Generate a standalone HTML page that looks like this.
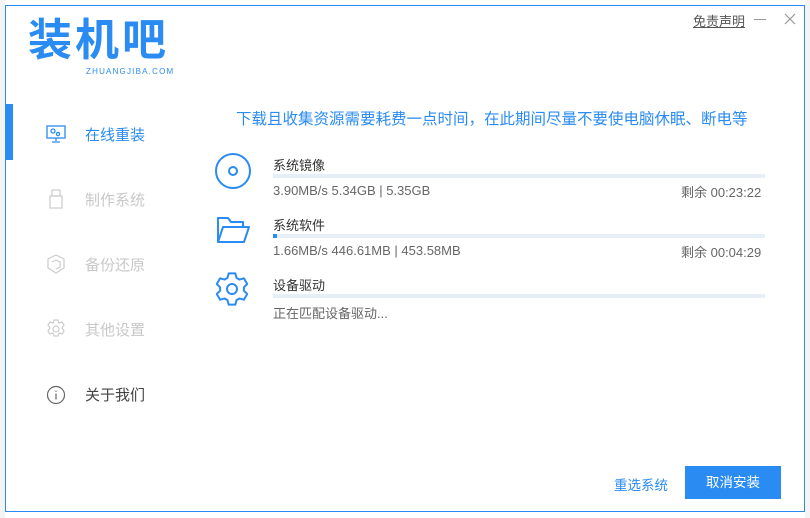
<!DOCTYPE html>
<html><head><meta charset="utf-8"><style>
*{margin:0;padding:0;box-sizing:border-box}
body{width:810px;height:518px;background:#fff;position:relative;overflow:hidden;font-family:"Liberation Sans","Noto Sans CJK SC",sans-serif}
.a{position:absolute}
.win{left:5px;top:5px;width:800px;height:507px;border:1px solid #2a8bf2;background:#fff}
.nav{font-size:15px;color:#c8c8c8}
.t{font-size:13px;color:#333}
.s{font-size:13px;color:#666}
.bar{height:4px;background:#e6eef8;width:492px;left:273px}
</style></head><body>
<div class="a" style="left:0;top:0;width:5px;height:518px;background:#f4f4f4"></div>
<div class="a" style="left:805px;top:0;width:5px;height:518px;background:#f4f4f4"></div>
<div class="a win"></div>
<div class="a" style="left:5px;top:104px;width:8px;height:56px;background:#2a8bf2"></div>
<div class="a" style="left:28px;top:18px;font-size:44px;font-weight:bold;color:#2a8bf2;letter-spacing:3px;line-height:46px">装机吧</div>
<div class="a" style="left:86px;top:67px;font-size:8px;color:#2a8bf2;letter-spacing:1.2px">ZHUANGJIBA.COM</div>
<div class="a" style="left:693px;top:11px;font-size:13px;color:#555;text-decoration:underline">免责声明</div>
<div class="a" style="left:754px;top:19px;width:12px;height:1px;background:#999"></div>
<svg class="a" style="left:784px;top:13px" width="12" height="12"><path d="M1 1L11 11M11 1L1 11" stroke="#999" stroke-width="1.2"/></svg>

<svg class="a" style="left:46px;top:125px" width="20" height="18" fill="none" stroke="#2a8bf2" stroke-width="1.3"><rect x="1" y="1" width="18" height="12"/><path d="M10 13v3M6 17h8"/><circle cx="7" cy="6" r="2"/><circle cx="12" cy="9" r="1.6"/></svg>
<div class="a nav" style="left:85px;top:124px;color:#2a8bf2">在线重装</div>
<svg class="a" style="left:49px;top:189px" width="14" height="20" fill="none" stroke="#ccc" stroke-width="1.2"><rect x="3" y="1" width="8" height="6"/><rect x="1" y="7" width="12" height="12"/></svg>
<div class="a nav" style="left:85px;top:189px">制作系统</div>
<svg class="a" style="left:47px;top:254px" width="18" height="20" fill="none" stroke="#ccc" stroke-width="1.2"><path d="M9 1l8 4v9l-8 5-8-5V5z"/><path d="M5 8l4-2 4 2v5l-4 2"/></svg>
<div class="a nav" style="left:85px;top:254px">备份还原</div>
<svg class="a" style="left:46px;top:319px" width="20" height="20" fill="none" stroke="#ccc" stroke-width="1.2"><path d="M8 1h4l1 3 3-1 2 3-2 3 2 3-2 3-3-1-1 3H8l-1-3-3 1-2-3 2-3-2-3 2-3 3 1z"/><circle cx="10" cy="10" r="3"/></svg>
<div class="a nav" style="left:85px;top:319px">其他设置</div>
<svg class="a" style="left:46px;top:385px" width="20" height="20" fill="none" stroke="#666" stroke-width="1.2"><circle cx="10" cy="10" r="8.5"/><path d="M10 8.5v6M10 5.5v1.2"/></svg>
<div class="a nav" style="left:85px;top:384px;color:#444">关于我们</div>

<div class="a" style="left:236px;top:107px;font-size:15.5px;color:#2a8bf2">下载且收集资源需要耗费一点时间，在此期间尽量不要使电脑休眠、断电等</div>

<svg class="a" style="left:214px;top:152px" width="38" height="38" fill="none" stroke="#2a8bf2" stroke-width="2"><circle cx="19" cy="19" r="17"/><circle cx="19" cy="19" r="4"/></svg>
<div class="a t" style="left:273px;top:155px">系统镜像</div>
<div class="a bar" style="top:174px"></div>
<div class="a s" style="left:273px;top:183px">3.90MB/s 5.34GB | 5.35GB</div>
<div class="a s" style="left:681px;top:182px">剩余 00:23:22</div>

<svg class="a" style="left:216px;top:215px" width="34" height="30" fill="none" stroke="#2a8bf2" stroke-width="2" stroke-linejoin="round"><path d="M2 27V3h10l3 4h12v4"/><path d="M2 27l5-15h26l-5 15z"/></svg>
<div class="a t" style="left:273px;top:215px">系统软件</div>
<div class="a bar" style="top:234px"></div>
<div class="a" style="left:273px;top:234px;width:4px;height:4px;background:#2a8bf2"></div>
<div class="a s" style="left:273px;top:243px">1.66MB/s 446.61MB | 453.58MB</div>
<div class="a s" style="left:681px;top:242px">剩余 00:04:29</div>

<svg class="a" style="left:214px;top:271px" width="36" height="36" fill="none" stroke="#2a8bf2" stroke-width="2" stroke-linejoin="round"><path d="M13.5 6.88L14.67 2.35H21.33L22.5 6.88L25.39 8.54L29.89 7.3L33.22 13.06L29.88 16.33V19.67L33.22 22.94L29.89 28.7L25.39 27.46L22.5 29.12L21.33 33.65H14.67L13.5 29.12L10.61 27.46L6.11 28.7L2.78 22.94L6.12 19.67V16.33L2.78 13.06L6.11 7.3L10.61 8.54Z"/><circle cx="18" cy="18" r="5"/></svg>
<div class="a t" style="left:273px;top:275px">设备驱动</div>
<div class="a bar" style="top:294px"></div>
<div class="a s" style="left:273px;top:303px">正在匹配设备驱动...</div>

<div class="a" style="left:614px;top:474px;font-size:13.5px;color:#2a8bf2">重选系统</div>
<div class="a" style="left:685px;top:466px;width:96px;height:33px;background:#2a8bf2;color:#fff;font-size:13.5px;text-align:center;line-height:33px">取消安装</div>
</body></html>
